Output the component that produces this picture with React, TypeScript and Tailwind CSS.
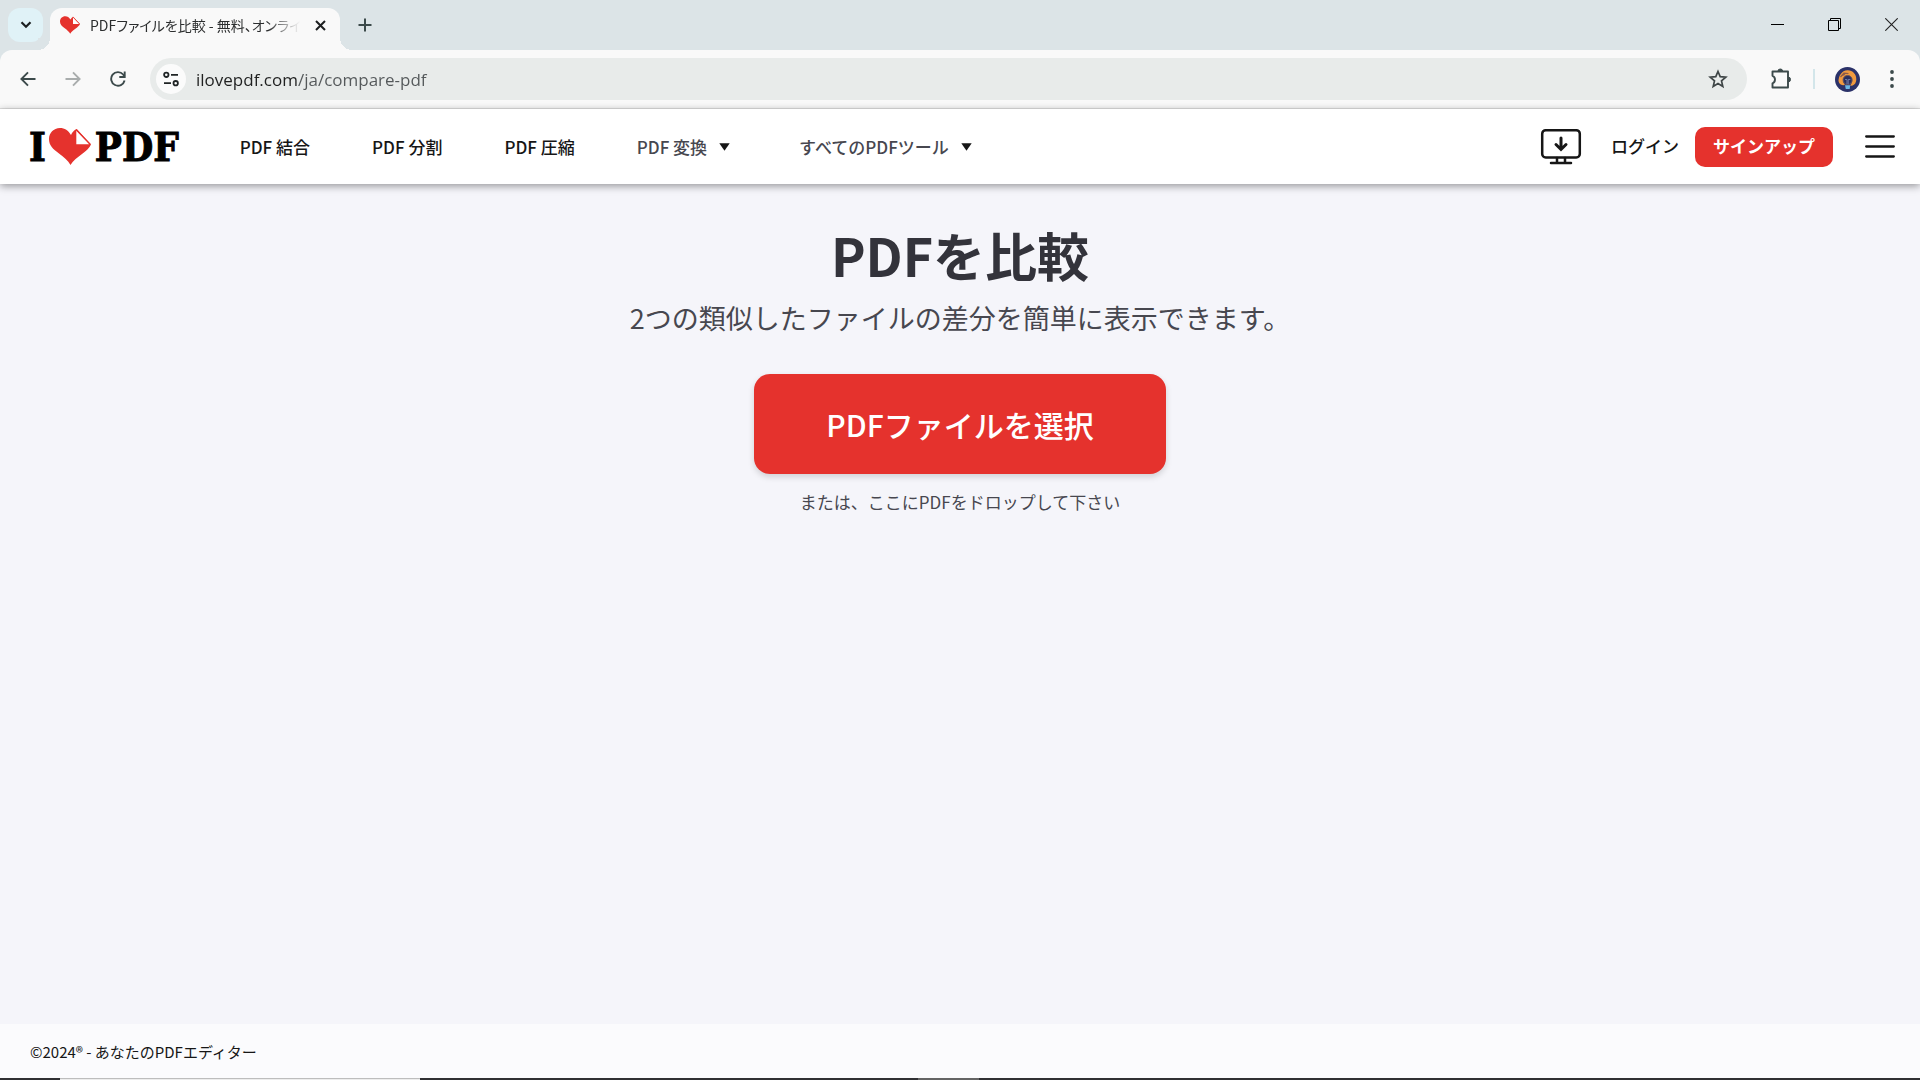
import type { ReactNode } from "react";

type NavItem = {
  label: string;
  href: string;
  dropdown?: boolean;
};

const navItems: NavItem[] = [
  { label: "PDF 結合", href: "#merge" },
  { label: "PDF 分割", href: "#split" },
  { label: "PDF 圧縮", href: "#compress" },
  { label: "PDF 変換", href: "#convert", dropdown: true },
  { label: "すべてのPDFツール", href: "#tools", dropdown: true },
];

// Heart with the folded page corner
const Heart = ({ className }: { className: string }) => (
  <svg viewBox="0 0 42 37" className={className} aria-hidden="true">
    <path
      fill="#e5322d"
      d="M21.5 37C19 32.500 15 29.500 10 25.500C4 21 0 17.500 0 11C0 5 4.500 0 11 0C15.500 0 19.500 2.500 22 7C23.200 4.200 25 2.200 27.500 1L42 16.500C40.500 20 37 23 33 26C28 29.800 24 32.500 21.500 37Z"
    />
    <path fill="#fff" d="M27.300 2.800V16.300H40.300Z" />
    <path fill="none" stroke="#e5322d" strokeWidth="1.200" d="M27.300 1.500L41.300 16.300" />
  </svg>
);

const WindowButton = ({
  label,
  children,
}: {
  label: string;
  children: ReactNode;
}) => (
  <button aria-label={label} className="flex h-full w-[57px] items-center justify-center">
    {children}
  </button>
);

const TabStrip = () => (
  <div className="flex h-[50px] items-stretch pl-2">
    <button
      aria-label="タブを検索"
      className="mt-2 flex h-[34px] w-[35px] items-center justify-center rounded-xl bg-[#e0f2f7]"
    >
      <svg width="12" height="8" viewBox="0 0 12 8" fill="none" stroke="#1c1f20" strokeWidth="2.200">
        <path d="M1.500 1.300L6 5.800L10.500 1.300" />
      </svg>
    </button>

    <div className="relative mt-2 ml-[7px] flex w-[290px] items-center rounded-t-xl bg-[#f9f9f9] pb-2 pl-[10px]">
      <span className="absolute bottom-0 -left-3 size-3 bg-[radial-gradient(circle_at_0_0,#dce4e7_12px,#f9f9f9_12px)]" />
      <span className="absolute -right-3 bottom-0 size-3 bg-[radial-gradient(circle_at_100%_0,#dce4e7_12px,#f9f9f9_12px)]" />
      <Heart className="h-[18px] w-5" />
      <span className="ml-[10px] w-[210px] text-[14px] leading-6 whitespace-nowrap text-[#2b2d2e] [font-feature-settings:'palt'] [mask-image:linear-gradient(90deg,#000_178px,transparent)]">
        PDFファイルを比較 - 無料、オンライ
      </span>
      <button aria-label="タブを閉じる" className="ml-[10px] flex size-5 items-center justify-center">
        <svg width="11" height="11" viewBox="0 0 11 11" stroke="#1c1f20" strokeWidth="2">
          <path d="M1 1L10 10M10 1L1 10" />
        </svg>
      </button>
    </div>

    <button aria-label="新しいタブ" className="ml-3 flex w-[26px] items-center justify-center">
      <svg width="14" height="14" viewBox="0 0 14 14" stroke="#3c4a4b" strokeWidth="2">
        <path d="M7 .5V13.500M.5 7H13.500" />
      </svg>
    </button>

    <div className="ml-auto flex h-12">
      <WindowButton label="最小化">
        <svg width="13" height="13" viewBox="0 0 13 13" stroke="#000">
          <path d="M0 6.500H13" />
        </svg>
      </WindowButton>
      <WindowButton label="元に戻す">
        <svg width="13" height="13" viewBox="0 0 13 13" fill="none" stroke="#000">
          <path d="M.5 2.500H10.500V12.500H.5ZM2.500 2.500V.5H12.500V10.500H10.500" />
        </svg>
      </WindowButton>
      <WindowButton label="閉じる">
        <svg width="13" height="13" viewBox="0 0 13 13" stroke="#222" strokeWidth="1.100">
          <path d="M.3 .3L12.700 12.700M12.700 .3L.3 12.700" />
        </svg>
      </WindowButton>
    </div>
  </div>
);

const Toolbar = () => (
  <div className="flex h-[59px] items-center rounded-t-xl border-b border-[#e0e0e0] bg-[#f9f9f9] pr-[18px] pl-[5px]">
    <button aria-label="戻る" className="flex h-10 w-[45px] items-center justify-center">
      <svg width="16" height="16" viewBox="0 0 16 16" fill="none" stroke="#3c4a4b" strokeWidth="1.900">
        <path d="M15.500 8H1.500M8 1.300L1.400 8L8 14.700" />
      </svg>
    </button>
    <button aria-label="進む" className="flex h-10 w-[45px] items-center justify-center">
      <svg width="16" height="16" viewBox="0 0 16 16" fill="none" stroke="#a9adad" strokeWidth="1.900">
        <path d="M.5 8H14.500M8 1.300L14.600 8L8 14.700" />
      </svg>
    </button>
    <button aria-label="再読み込み" className="flex h-10 w-[45px] items-center justify-center">
      <svg width="16" height="16" viewBox="0 0 16 16" fill="none" stroke="#3c4a4b" strokeWidth="1.900">
        <path d="M14.600 9.500A6.800 6.800 0 1 1 13.200 3.500L14.500 5.500" />
        <path d="M14.700 .5V6H9.300" />
      </svg>
    </button>

    <div className="ml-[10px] flex h-[42px] flex-1 items-center rounded-full bg-[#e8ebea] pr-[19px] pl-[6px]">
      <button
        aria-label="サイト情報を表示"
        className="flex size-[30px] items-center justify-center rounded-full bg-[#fbfbfb]"
      >
        <svg width="16" height="16" viewBox="0 0 16 16" fill="none" stroke="#1f2425" strokeWidth="1.800">
          <circle cx="3.300" cy="3.800" r="2.200" />
          <path d="M8 3.800H15M1 12.200H8" />
          <circle cx="12.700" cy="12.200" r="2.200" />
        </svg>
      </button>
      <input
        type="text"
        aria-label="アドレスバー"
        defaultValue="ilovepdf.com/ja/compare-pdf"
        className="ml-[10px] min-w-0 flex-1 bg-[linear-gradient(90deg,#1f2020_101px,#54585a_101px)] bg-clip-text pt-[2px] font-['Open_Sans','Noto_Sans_CJK_JP',sans-serif] text-[17px] leading-7 text-transparent outline-none"
      />
      <button aria-label="ブックマーク" className="flex size-5 items-center justify-center">
        <svg width="20" height="20" viewBox="0 0 20 20" fill="none" stroke="#3e4546" strokeWidth="1.700">
          <path d="M10 2.500L12.200 7.700L17.800 8.200L13.500 11.900L14.800 17.400L10 14.500L5.200 17.400L6.500 11.900L2.200 8.200L7.800 7.700Z" />
        </svg>
      </button>
    </div>

    <button aria-label="拡張機能" className="ml-[22px] flex size-6 items-center justify-center">
      <svg width="22" height="22" viewBox="0 0 22 22" fill="none" stroke="#3c4a4b" strokeWidth="1.900">
        <path d="M2.500 3.500H18V19.500H2.500V15.300C5.800 14.200 5.800 8.900 2.500 7.800Z" strokeLinejoin="round" />
        <path d="M8 3A2.300 2 0 0 1 12.600 3ZM18.500 9.200A2 2.300 0 0 1 18.500 13.800Z" fill="#3c4a4b" strokeWidth="1" />
      </svg>
    </button>
    <span className="ml-5 h-5 w-[2px] bg-[#d3e6ea]" />
    <button aria-label="プロフィール" className="ml-5 size-[25px]">
      <svg width="25" height="25" viewBox="0 0 25 25">
        <circle cx="12.500" cy="12.500" r="12.500" fill="#2b3269" />
        <path
          fill="#f09a3e"
          d="M3.500 14C3.500 9 6.500 3.500 12.500 3.200C17.500 3 21.500 7 21.300 12.500C21.200 15.500 20 17.800 17 18.800L15 18.500C18 16 18.500 9 12.500 8.800C7 9 7.500 15.500 10 18L8 18.300C5.500 18 4 16.500 3.500 14Z"
        />
        <path fill="none" stroke="#8a5a4c" strokeWidth="1.200" d="M5.500 10L9 6.200L13.500 6.500M7 8.500L10 7.500" />
        <ellipse cx="12.600" cy="13" rx="4.500" ry="4.600" fill="#2a2f5d" stroke="#6a5560" />
        <path fill="none" stroke="#7580ad" strokeWidth=".9" d="M10 12.500H12V17M13.200 17V12.500H15.300" />
        <path fill="#69b6e4" d="M10 18.300L15.200 18.300L14.700 22H10.800Z" />
      </svg>
    </button>
    <button aria-label="メニュー" className="ml-[22px] flex h-8 w-5 items-center justify-center">
      <svg width="4" height="18" viewBox="0 0 4 18" fill="#3c4a4b">
        <circle cx="2" cy="2" r="1.900" />
        <circle cx="2" cy="9" r="1.900" />
        <circle cx="2" cy="16" r="1.900" />
      </svg>
    </button>
  </div>
);

const SiteHeader = () => (
  <header className="relative flex h-[75px] items-center bg-white px-[25px] shadow-[0_2px_8px_rgba(0,0,0,0.4)]">
    <a
      href="#home"
      aria-label="I love PDF"
      className="ml-1 flex items-center font-['DejaVu_Serif_Condensed','DejaVu_Serif',serif] text-[40px] leading-10 font-bold text-black [-webkit-text-stroke:1px_#000]"
    >
      <span>I</span>
      <Heart className="mr-1 ml-[3px] h-[37px] w-[42px]" />
      <span>PDF</span>
    </a>

    <nav className="ml-[30px] flex items-center text-[17px] leading-6 font-medium">
      {navItems.map((item) => (
        <a
          key={item.href}
          href={item.href}
          className={
            item.dropdown
              ? "flex items-center pr-[38px] pl-[31px] text-[#47474f]"
              : "flex items-center px-[31px] text-[#161616]"
          }
        >
          {item.label}
          {item.dropdown && (
            <svg width="11" height="8" viewBox="0 0 11 8" className="ml-3" fill="#161616">
              <path d="M.3 .3H10.700L5.500 7.700Z" />
            </svg>
          )}
        </a>
      ))}
    </nav>

    <div className="ml-auto flex items-center text-[17px] leading-6">
      <a href="#desktop" aria-label="デスクトップ版">
        <svg width="42" height="38" viewBox="0 0 42 38" fill="none" stroke="#161616" strokeWidth="2.500" strokeLinecap="round">
          <rect x="2.200" y="2.200" width="37.600" height="27.300" rx="3.500" />
          <path d="M17 30V35M25 30V35M11 35H31" />
          <path d="M21 10V21M16 16.500L21 21.500L26 16.500" strokeWidth="3" />
        </svg>
      </a>
      <a href="#login" className="ml-[29px] pb-[2px] font-medium text-[#161616]">
        ログイン
      </a>
      <a
        href="#signup"
        className="ml-4 flex h-10 items-center rounded-[10px] bg-[#e5322d] px-[18px] pb-[2px] font-bold text-white"
      >
        サインアップ
      </a>
      <button aria-label="メニューを開く" className="ml-8">
        <svg width="30" height="24" viewBox="0 0 30 24" stroke="#161616" strokeWidth="2.300" strokeLinecap="round">
          <path d="M1.200 1.500H28.800M1.200 11.500H28.800M1.200 21.500H28.800" />
        </svg>
      </button>
    </div>
  </header>
);

const App = () => {
  return (
    <div className="flex min-h-screen flex-col bg-[#dce4e7] font-['Noto_Sans_CJK_JP',sans-serif]">
      <TabStrip />
      <Toolbar />
      <SiteHeader />

      <main className="flex flex-1 flex-col items-center bg-[#f5f5fa] pt-[39px]">
        <h1 className="text-[52px] leading-[64px] font-semibold text-[#33333b]">PDFを比較</h1>
        <p className="mt-[11px] text-[27px] leading-10 text-[#47474f]">
          2つの類似したファイルの差分を簡単に表示できます。
        </p>
        <button className="mt-9 h-[100px] rounded-2xl bg-[#e5322d] px-[72px] text-[30px] leading-10 font-medium text-white shadow-[0_3px_6px_rgba(0,0,0,0.15)]">
          PDFファイルを選択
        </button>
        <p className="mt-4 text-[17px] leading-6 text-[#47474f]">
          または、ここにPDFをドロップして下さい
        </p>
      </main>

      <footer className="flex h-[54px] items-center bg-[#fbfbfd] px-[30px] pt-[2px] text-[15px] leading-6 text-[#161616]">
        ©2024® - あなたのPDFエディター
      </footer>

      {/* top edge of the taskbar */}
      <div className="flex h-[2px] bg-[#303033]">
        <span className="ml-[60px] w-[360px] border-t border-[#bdbdbd] bg-[#ededed]" />
        <span className="ml-[498px] w-[61px] bg-[#646464]" />
      </div>
    </div>
  );
};

export default App;
